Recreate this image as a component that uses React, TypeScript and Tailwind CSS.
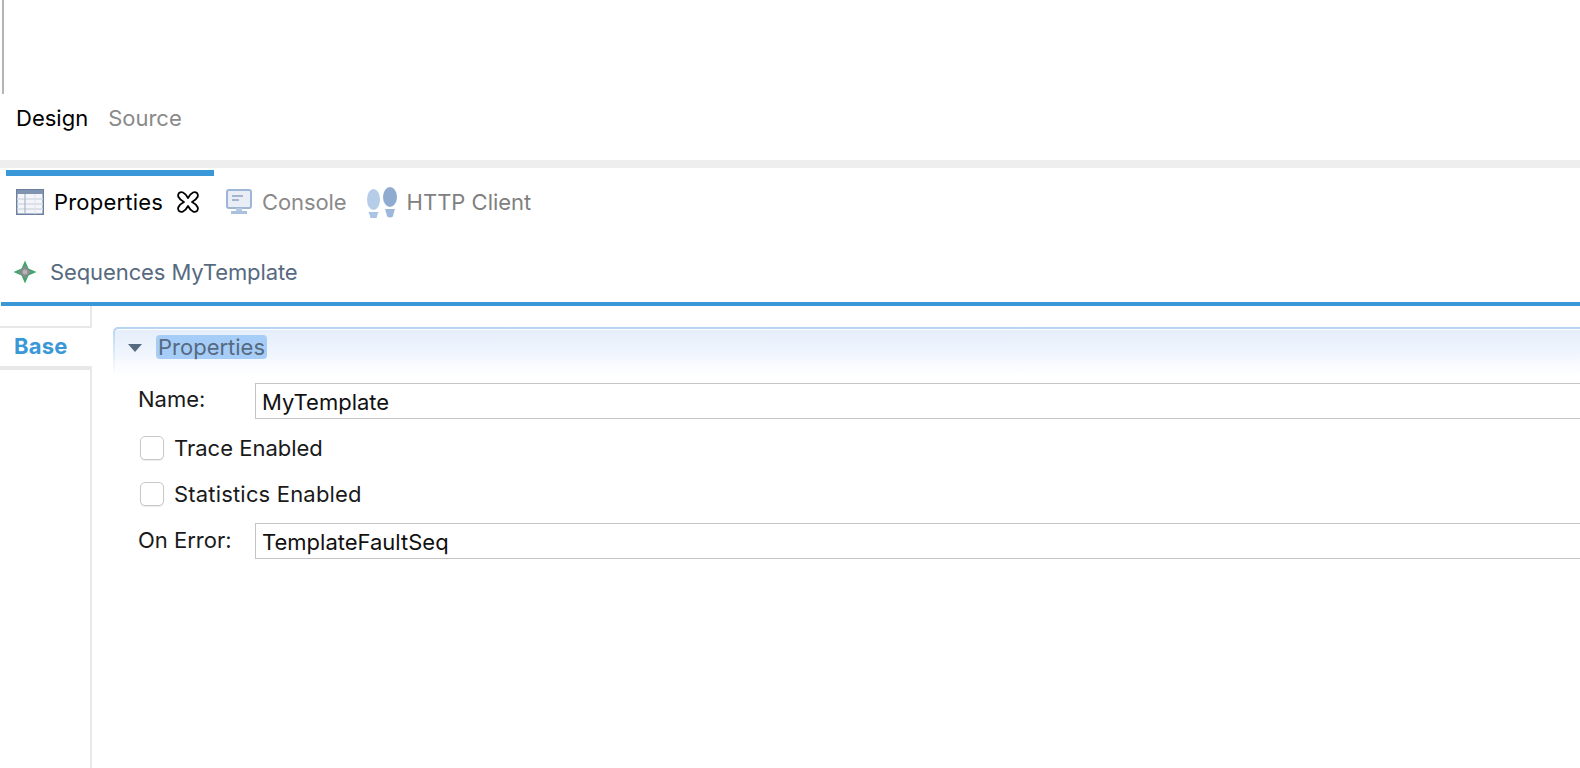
function TableIcon() {
  return (
    <svg width="28" height="26" viewBox="0 0 28 26" className="shrink-0">
      <rect x="0.75" y="0.75" width="26.5" height="24.5" fill="#f3f5f9" stroke="#6c7fa0" strokeWidth="1.5" />
      <rect x="1" y="1" width="26" height="4" fill="#7f92b0" />
      <path d="M1 10h26M1 15h26M1 20h26" stroke="#d3d9e4" strokeWidth="1.5" />
      <path d="M9 5v20" stroke="#a9b5c9" strokeWidth="1.2" />
      <path d="M19 5v20" stroke="#dfe3ea" strokeWidth="1" />
    </svg>
  );
}

function CloseIcon() {
  return (
    <svg width="22" height="22" viewBox="0 0 22 22" className="shrink-0">
      <path
        d="M2 2 Q4 0.5 6 1.5 Q9 3 11 7 Q13 3 16 1.5 Q18 0.5 20 2 Q21.5 4 20.5 6 Q19 9 15 11 Q19 13 20.5 16 Q21.5 18 20 20 Q18 21.5 16 20.5 Q13 19 11 15 Q9 19 6 20.5 Q4 21.5 2 20 Q0.5 18 1.5 16 Q3 13 7 11 Q3 9 1.5 6 Q0.5 4 2 2 Z"
        fill="#fff"
        stroke="#000"
        strokeWidth="1.8"
        strokeLinejoin="round"
      />
    </svg>
  );
}

function ConsoleIcon() {
  return (
    <svg width="26" height="26" viewBox="0 0 26 26" className="shrink-0">
      <rect x="1" y="1" width="24" height="18" rx="2" fill="#e9eef6" stroke="#9db6d6" strokeWidth="2" />
      <path d="M6 7h11M6 11h7" stroke="#8ea3bf" strokeWidth="1.5" />
      <rect x="10" y="19" width="6" height="3" fill="#b6c9e2" />
      <rect x="5" y="22" width="16" height="3" fill="#a9c0de" />
    </svg>
  );
}

function StepsIcon() {
  return (
    <svg width="30" height="31" viewBox="0 0 30 31" className="shrink-0">
      <ellipse cx="6.5" cy="12.5" rx="6.5" ry="10.5" fill="#b5cde8" />
      <path d="M1.5 25h10l-1.5 4a3.5 3.5 0 0 1-7 0z" fill="#a9c4e4" />
      <ellipse cx="23" cy="10" rx="7" ry="10" fill="#8fabd0" />
      <path d="M18 22h10l-1.5 5a3.5 3.5 0 0 1-7 0z" fill="#9db8da" />
    </svg>
  );
}

function SequenceIcon() {
  return (
    <svg width="24" height="24" viewBox="0 0 24 24" className="shrink-0">
      <path d="M12 0.5 L15.5 8.5 L23.5 12 L15.5 15.5 L12 23.5 L8.5 15.5 L0.5 12 L8.5 8.5 Z" fill="#3fa56c" />
      <path d="M12 5.5 L15 9 L18.5 12 L15 15 L12 18.5 L9 15 L5.5 12 L9 9 Z" fill="#8a8a8a" />
      <circle cx="12" cy="12" r="2.5" fill="#b5b5b5" />
    </svg>
  );
}

function Field({ label, value, labelClass }: { label: string; value: string; labelClass: string }) {
  return (
    <div className="flex items-start">
      <div className={`w-[117px] shrink-0 text-[#1a1a1a] ${labelClass}`}>{label}</div>
      <div className="flex-1 h-[36px] border border-[#c4c4c4] border-r-0 pl-[6px] text-[#111] leading-[36px]">{value}</div>
    </div>
  );
}

function Check({ label, className }: { label: string; className?: string }) {
  return (
    <div className="flex items-center h-[24px] pl-[2px] gap-[10px]">
      <div className="w-[24px] h-[24px] rounded-[5px] border border-[#c8c8c8] bg-white shadow-[0_1px_1px_rgba(0,0,0,0.08)]" />
      <span className={`text-[#1a1a1a] ${className ?? ''}`}>{label}</span>
    </div>
  );
}

export default function App() {
  return (
    <div className="w-[1580px] h-[768px] bg-white overflow-hidden flex flex-col font-['Inter',sans-serif] text-[22px]">
      <div className="h-[160px] shrink-0 flex flex-col">
        <div className="h-[94px] w-[2px] ml-[2px] bg-[#b4b4b4]" />
        <div className="flex items-center gap-[20px] pl-[16px] h-[48px]">
          <span className="text-black">Design</span>
          <span className="text-[#8a8a8a]">Source</span>
        </div>
      </div>
      <div className="h-[8px] shrink-0 bg-[#eeeeee]" />
      <div className="h-[134px] shrink-0 flex flex-col">
        <div className="h-[6px] w-[208px] ml-[6px] mt-[2px] bg-[#3a98d8]" />
        <div className="flex items-center h-[52px] pl-[16px]">
          <TableIcon />
          <span className="ml-[10px] text-black tracking-[0.2px]">Properties</span>
          <span className="ml-[14px]"><CloseIcon /></span>
          <span className="ml-[27px]"><ConsoleIcon /></span>
          <span className="ml-[10px] text-[#8a8a8a] tracking-[-0.1px]">Console</span>
          <span className="ml-[20px]"><StepsIcon /></span>
          <span className="ml-[10px] text-[#808080]">HTTP Client</span>
        </div>
        <div className="flex items-center h-[40px] mt-[24px] pl-[13px] gap-[13px] text-[#566a80] tracking-[-0.1px]">
          <SequenceIcon />
          <span>Sequences MyTemplate</span>
        </div>
      </div>
      <div className="h-[4px] ml-[1px] shrink-0 bg-[#3a98d8]" />
      <div className="flex-1 flex min-h-0">
        <div className="w-[92px] shrink-0 border-r-2 border-[#e8e8e8] flex flex-col pt-[20px]">
          <div className="h-[44px] border-t-2 border-b-4 border-[#e8e8e8] pl-[14px] pb-[2px] mr-[-2px] bg-white flex items-center font-bold text-[#3a98d8] tracking-[0.2px]">Base</div>
        </div>
        <div className="flex-1 pl-[21px] pt-[21px]">
          <div className="pt-[2px] pl-[2px] rounded-tl-[5px] bg-gradient-to-b from-[#b5d3f3] to-white">
            <div className="h-[46px] border-t border-white rounded-tl-[4px] bg-gradient-to-b from-[#e4eefa] via-[#f0f5fd] to-white flex items-start pt-[5px] pl-[12px]">
              <svg width="16" height="10" viewBox="0 0 16 10" className="shrink-0 mt-[8px]">
                <path d="M1 1h14l-7 8z" fill="#566a80" />
              </svg>
              <span className="ml-[13px] px-[2px] rounded-[4px] bg-[#a6cdf8] text-[#566a80] leading-[24px]">Properties</span>
            </div>
          </div>
          <div className="pl-[25px] pt-[8px]">
            <Field label="Name:" value="MyTemplate" labelClass="leading-[33px]" />
            <div className="mt-[17px] flex flex-col gap-[22px]">
              <Check label="Trace Enabled" />
              <Check label="Statistics Enabled" className="tracking-[0.18px]" />
            </div>
            <div className="mt-[17px]">
              <Field label="On Error:" value="TemplateFaultSeq" labelClass="leading-[35px]" />
            </div>
          </div>
        </div>
      </div>
    </div>
  );
}
